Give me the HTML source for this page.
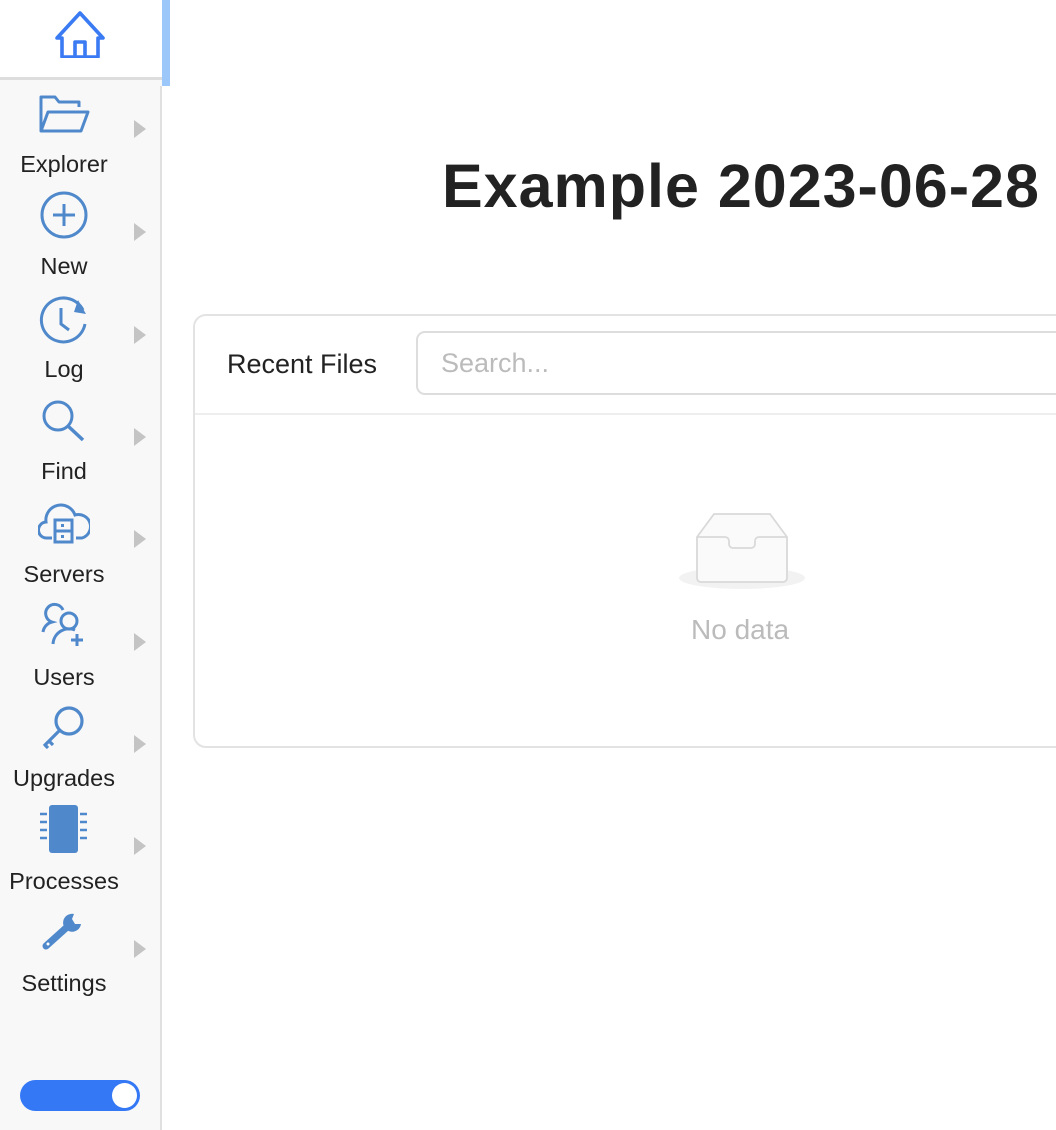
<!DOCTYPE html>
<html><head><meta charset="utf-8"><style>
*{margin:0;padding:0;box-sizing:border-box}
html,body{width:1056px;height:1130px;overflow:hidden;background:#fff;font-family:"Liberation Sans",sans-serif}
.side{position:absolute;left:0;top:0;width:162px;height:1130px;background:#f8f8f8;border-right:2px solid #e0e0e0}
.home{position:absolute;left:0;top:0;width:170px;height:86px;background:#9cc7fb}
.homein{position:absolute;left:0;top:0;width:162px;height:77px;background:#fff}
.homeline{position:absolute;left:0;top:77px;width:162px;height:3px;background:#ddd}
.homebot{position:absolute;left:0;top:80px;width:162px;height:6px;background:#f8f8f8}
.item{position:absolute;left:0;width:160px;height:102px}
.item svg.ic{position:absolute;left:38px;top:0}
.item .lbl{position:absolute;left:0;width:128px;text-align:center;top:50px;font-size:23.5px;color:#222}
.arr{position:absolute;left:134px;top:27px;width:0;height:0;border-left:12px solid #c4c4c4;border-top:9px solid transparent;border-bottom:9px solid transparent}
.title{position:absolute;left:442px;top:150px;font-size:61px;font-weight:bold;color:#222;letter-spacing:1px;white-space:nowrap;line-height:72px}
.card{position:absolute;left:193px;top:314px;width:900px;height:434px;border:2px solid #e3e3e3;border-radius:13px}
.hd{position:absolute;left:0;top:97px;width:100%;height:2px;background:#eee}
.rf{position:absolute;left:32px;top:33px;font-size:27px;color:#222}
.search{position:absolute;left:221px;top:15px;width:700px;height:64px;border:2px solid #ddd;border-radius:9px;font-size:27px;color:#bbb;padding:15px 0 0 23px}
.nd{position:absolute;left:496px;top:298px;font-size:28px;color:#bbb}
.tog{position:absolute;left:20px;top:1080px;width:120px;height:31px;border-radius:16px;background:#3478f6}
.knob{position:absolute;right:3px;top:3px;width:25px;height:25px;border-radius:50%;background:#fff}
</style></head><body>
<div class="side"></div>
<div class="home"><div class="homein"></div><div class="homeline"></div><div class="homebot"></div>
<svg style="position:absolute;left:55px;top:10px" width="50" height="48" viewBox="0 0 50 48"><path d="M7 47V28H2L25 3L48 28H43V47H7Z M20 47V32H30V47" fill="none" stroke="#3a7af3" stroke-width="3.6" stroke-linejoin="round"/></svg>
</div>

<div class="item" style="top:93px"><svg class="ic" width="52" height="40" viewBox="0 0 52 40"><path d="M3 38V4H17L21 9H41V14 M3 38L10 19H50L43 38Z" fill="none" stroke="#5089cb" stroke-width="3" stroke-linejoin="round"/></svg><div class="arr"></div><div class="lbl" style="top:58px">Explorer</div></div>

<div class="item" style="top:190px"><svg class="ic" width="52" height="52" viewBox="0 0 52 52"><circle cx="26" cy="25" r="22" fill="none" stroke="#5089cb" stroke-width="3"/><path d="M26 14V36M15 25H37" stroke="#5089cb" stroke-width="3"/></svg><div class="arr" style="top:33px"></div><div class="lbl" style="top:63px">New</div></div>

<div class="item" style="top:294px"><svg class="ic" width="52" height="52" viewBox="0 0 52 52"><path d="M45 16A22 22 0 1 0 47 30" fill="none" stroke="#5089cb" stroke-width="3"/><path d="M40 6L48 20L36 18Z" fill="#5089cb"/><path d="M23 14V30L31 36" fill="none" stroke="#5089cb" stroke-width="3"/></svg><div class="arr" style="top:32px"></div><div class="lbl" style="top:62px">Log</div></div>

<div class="item" style="top:398px"><svg class="ic" width="52" height="46" viewBox="0 0 52 46"><circle cx="20" cy="18" r="14" fill="none" stroke="#5089cb" stroke-width="3"/><path d="M30 28L45 42" stroke="#5089cb" stroke-width="3.5"/></svg><div class="arr" style="top:30px"></div><div class="lbl" style="top:60px">Find</div></div>

<div class="item" style="top:502px"><svg class="ic" width="52" height="42" viewBox="0 0 52 42"><path d="M14 36H9A8 8 0 0 1 8 20A15 15 0 0 1 37 13A11 11 0 0 1 44 36H38" fill="none" stroke="#5089cb" stroke-width="3"/><rect x="17" y="18" width="17" height="22" fill="none" stroke="#5089cb" stroke-width="3"/><path d="M17 29H34" stroke="#5089cb" stroke-width="3"/><rect x="23" y="22" width="3" height="3" fill="#5089cb"/><rect x="23" y="33" width="3" height="3" fill="#5089cb"/></svg><div class="arr" style="top:28px"></div><div class="lbl" style="top:59px">Servers</div></div>

<div class="item" style="top:602px"><svg class="ic" width="52" height="50" viewBox="0 0 52 50"><path d="M5 30A12 12 0 0 1 14 20A9 9 0 1 1 25 8" fill="none" stroke="#5089cb" stroke-width="3"/><circle cx="31" cy="19" r="8" fill="none" stroke="#5089cb" stroke-width="3"/><path d="M15 42A16 16 0 0 1 37 28" fill="none" stroke="#5089cb" stroke-width="3"/><path d="M39 32V44M33 38H45" stroke="#5089cb" stroke-width="3"/></svg><div class="arr" style="top:31px"></div><div class="lbl" style="top:62px">Users</div></div>

<div class="item" style="top:704px"><svg class="ic" width="52" height="48" viewBox="0 0 52 48"><circle cx="31" cy="17" r="13" fill="none" stroke="#5089cb" stroke-width="3.2"/><path d="M21 27L6 42M11 37L15 41M7 41L10 44" stroke="#5089cb" stroke-width="3.2"/></svg><div class="arr" style="top:31px"></div><div class="lbl" style="top:61px">Upgrades</div></div>

<div class="item" style="top:805px"><svg class="ic" width="52" height="50" viewBox="0 0 52 50"><rect x="11" y="0" width="29" height="48" rx="3" fill="#5089cb"/><g stroke="#5089cb" stroke-width="2.5"><path d="M2 9H9M2 17H9M2 25H9M2 33H9M42 9H49M42 17H49M42 25H49M42 33H49"/></g></svg><div class="arr" style="top:32px"></div><div class="lbl" style="top:63px">Processes</div></div>

<div class="item" style="top:908px"><svg class="ic" width="52" height="46" viewBox="0 0 52 46"><path d="M8 38L28 20" stroke="#5089cb" stroke-width="7" stroke-linecap="round"/><path d="M36 6A9 9 0 1 0 43 16L37 16L34 11Z" fill="#5089cb"/><circle cx="10" cy="36" r="1.5" fill="#fff"/></svg><div class="arr" style="top:32px"></div><div class="lbl" style="top:62px">Settings</div></div>

<div class="tog"><div class="knob"></div></div>

<div class="title">Example 2023-06-28</div>

<div class="card">
<div class="rf">Recent Files</div>
<div class="search">Search...</div>
<div class="hd"></div>
<svg style="position:absolute;left:482px;top:194px" width="130" height="80" viewBox="0 0 130 80"><ellipse cx="65" cy="68" rx="63" ry="11" fill="#f2f2f2"/><path d="M20 27L37 4H93L110 27V68A4 4 0 0 1 106 72H24A4 4 0 0 1 20 68Z" fill="#fafafa" stroke="#d9d9d9" stroke-width="1.8"/><path d="M20 27H48A4 4 0 0 1 52 31V34A4 4 0 0 0 56 38H74A4 4 0 0 0 78 34V31A4 4 0 0 1 82 27H110" fill="none" stroke="#d9d9d9" stroke-width="1.8"/></svg>
<div class="nd">No data</div>
</div>
</body></html>
